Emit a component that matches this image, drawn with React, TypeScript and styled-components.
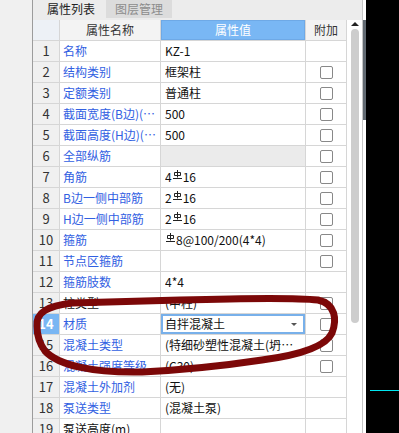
import React from "react";
import styled, { createGlobalStyle } from "styled-components";

const GlobalStyle = createGlobalStyle`
  html, body {
    margin: 0;
    padding: 0;
    background: #000;
  }
  body {
    font-family: "Noto Sans CJK SC", "Liberation Sans", sans-serif;
    font-size: 12px;
  }
`;

type Row = {
  name: string;
  value: string;
  check?: boolean;
  priv?: boolean;
  readonly?: boolean;
  select?: boolean;
};

// "#" in a value stands for the HRB400 rebar mark
const rows: Row[] = [
  { name: "名称", value: "KZ-1" },
  { name: "结构类别", value: "框架柱", check: true },
  { name: "定额类别", value: "普通柱", check: true },
  { name: "截面宽度(B边)(mm)", value: "500", check: true },
  { name: "截面高度(H边)(mm)", value: "500", check: true },
  { name: "全部纵筋", value: "", check: true, readonly: true },
  { name: "角筋", value: "4#16", check: true },
  { name: "B边一侧中部筋", value: "2#16", check: true },
  { name: "H边一侧中部筋", value: "2#16", check: true },
  { name: "箍筋", value: "#8@100/200(4*4)", check: true },
  { name: "节点区箍筋", value: "", check: true },
  { name: "箍筋肢数", value: "4*4" },
  { name: "柱类型", value: "(中柱)", check: true, priv: true },
  { name: "材质", value: "自拌混凝土", check: true, select: true },
  { name: "混凝土类型", value: "(特细砂塑性混凝土(坍落度35~50mm))", check: true },
  { name: "混凝土强度等级", value: "(C30)", check: true },
  { name: "混凝土外加剂", value: "(无)" },
  { name: "泵送类型", value: "(混凝土泵)" },
  { name: "泵送高度(m)", value: "", priv: true },
];

const RebarMark = () => (
  <RebarSvg width="9" height="10" viewBox="0 0 9 10">
    <path d="M4.5 0V7.5M1.5 2.5H7.5V5.5H1.5ZM0 8.5H9" stroke="#222" strokeWidth="1" fill="none" />
  </RebarSvg>
);

const renderValue = (v: string) => {
  const parts = v.split("#");
  return parts.map((p, i) => (
    <React.Fragment key={i}>
      {i > 0 && <RebarMark />}
      {p}
    </React.Fragment>
  ));
};

export default function App() {
  return (
    <>
      <GlobalStyle />
      <Screen>
        <Gutter />
        <Panel>
          <TabBar>
            <Tab active>属性列表</Tab>
            <Tab>图层管理</Tab>
          </TabBar>
          <Body>
            <Grid>
              <GridRow>
                <NumCell header />
                <HeadCell>属性名称</HeadCell>
                <HeadCell blue>属性值</HeadCell>
                <HeadCell>附加</HeadCell>
              </GridRow>
              {rows.map((r, i) => (
                <GridRow key={i}>
                  <NumCell current={r.select}>{i + 1}</NumCell>
                  <NameCell priv={r.priv}>{r.name}</NameCell>
                  <ValueCell readonly={r.readonly} select={r.select}>
                    <ValueText>{renderValue(r.value)}</ValueText>
                    {r.select && <DropArrow />}
                  </ValueCell>
                  <CheckCell>{r.check && <CheckBox />}</CheckCell>
                </GridRow>
              ))}
            </Grid>
            <ScrollBar>
              <UpArrow />
              <Thumb />
            </ScrollBar>
          </Body>
        </Panel>
        <Edge>
          <Splitter />
        </Edge>
        <Dark>
          <CyanLine />
        </Dark>
        <Mark width="399" height="433" viewBox="0 0 399 433">
          <path
            d="M37 326 C36 312, 48 306, 72 303 L180 300 C250 298, 300 298, 318 300 C336 304, 337 320, 332 333 C326 346, 300 355, 262 360 C222 366, 182 370, 142 372 C92 373, 58 365, 45 351 C39 343, 37 334, 37 326 Z"
            stroke="#7c0808"
            strokeWidth="7"
            fill="none"
            strokeLinejoin="round"
          />
        </Mark>
      </Screen>
    </>
  );
}

const Screen = styled.div`
  position: relative;
  display: flex;
  width: 399px;
  height: 433px;
  overflow: hidden;
  background: #000;
`;

const Gutter = styled.div`
  width: 32px;
  background: #f0f0f0;
`;

const Panel = styled.div`
  width: 329px;
  display: flex;
  flex-direction: column;
  background: #fff;
  border-left: 1px solid #9c9c9c;
  border-right: 1px solid #c6c6c6;
  overflow: hidden;
`;

const TabBar = styled.div`
  height: 20px;
  flex-shrink: 0;
  display: flex;
  gap: 2px;
  padding-left: 5px;
  background: #ececec;
`;

const Tab = styled.div<{ active?: boolean }>`
  width: 66px;
  height: 18px;
  line-height: 18px;
  text-align: center;
  font-size: 12px;
  color: ${(p) => (p.active ? "#222" : "#8c8c8c")};
  background: ${(p) => (p.active ? "#ececec" : "#dcdcdc")};
`;

const Body = styled.div`
  display: flex;
  flex: 1;
`;

const Grid = styled.div`
  width: 314px;
  display: flex;
  flex-direction: column;
`;

const GridRow = styled.div`
  display: grid;
  grid-template-columns: 27px 101px 145px 41px;
  height: 21px;
  flex-shrink: 0;
`;

const Cell = styled.div`
  box-sizing: border-box;
  height: 21px;
  border-right: 1px solid #d6d6d6;
  border-bottom: 1px solid #d6d6d6;
  line-height: 20px;
  white-space: nowrap;
  overflow: hidden;
`;

const NumCell = styled(Cell)<{ header?: boolean; current?: boolean }>`
  text-align: center;
  font-size: 13px;
  font-weight: ${(p) => (p.current ? 700 : 400)};
  color: ${(p) => (p.current ? "#fff" : "#333")};
  background: ${(p) => (p.header ? "#edf1f6" : p.current ? "#79b6f3" : "#f0f0f0")};
`;

const HeadCell = styled(Cell)<{ blue?: boolean }>`
  text-align: center;
  color: ${(p) => (p.blue ? "#fff" : "#333")};
  background: ${(p) => (p.blue ? "#79b7f4" : "#f3f3f3")};
  ${(p) => p.blue && "box-shadow: inset 0 0 0 1px #6ea9e6;"}
`;

const NameCell = styled(Cell)<{ priv?: boolean }>`
  padding-left: 3px;
  text-overflow: ellipsis;
  color: ${(p) => (p.priv ? "#111" : "#3160e2")};
`;

const ValueCell = styled(Cell)<{ readonly?: boolean; select?: boolean }>`
  display: flex;
  align-items: center;
  padding-left: 4px;
  padding-right: 8px;
  background: ${(p) => (p.readonly ? "#ebebeb" : "#fff")};
  color: #111;
  ${(p) => p.select && "box-shadow: inset 0 0 0 2px #78b0ea;"}
`;

const ValueText = styled.span`
  flex: 1;
  overflow: hidden;
  text-overflow: ellipsis;
  white-space: nowrap;
`;

const RebarSvg = styled.svg`
  vertical-align: 2px;
  margin: 0 1px;
`;

const DropArrow = styled.span`
  width: 0;
  height: 0;
  border-left: 3px solid transparent;
  border-right: 3px solid transparent;
  border-top: 3px solid #555;
`;

const CheckCell = styled(Cell)`
  display: flex;
  align-items: center;
  justify-content: center;
`;

const CheckBox = styled.span`
  box-sizing: border-box;
  width: 13px;
  height: 13px;
  border: 1px solid #888;
  border-radius: 2px;
  background: #fff;
`;

const ScrollBar = styled.div`
  width: 15px;
  display: flex;
  flex-direction: column;
  align-items: center;
  background: #fff;
`;

const UpArrow = styled.span`
  margin-top: 2px;
  width: 0;
  height: 0;
  border-left: 4px solid transparent;
  border-right: 4px solid transparent;
  border-bottom: 4px solid #222;
`;

const Thumb = styled.div`
  margin-top: 3px;
  width: 8px;
  height: 294px;
  border-radius: 4px;
  background: #cdcdcd;
`;

const Edge = styled.div`
  width: 3px;
  background: #fff;
`;

const Splitter = styled.div`
  margin-top: 20px;
  height: 100px;
  background: #626a72;
`;

const Dark = styled.div`
  flex: 1;
  padding-top: 390px;
  background: #000;
`;

const CyanLine = styled.div`
  margin-left: 4px;
  height: 1px;
  background: #00e6f0;
`;

const Mark = styled.svg`
  position: absolute;
  left: 0;
  top: 0;
  pointer-events: none;
`;
